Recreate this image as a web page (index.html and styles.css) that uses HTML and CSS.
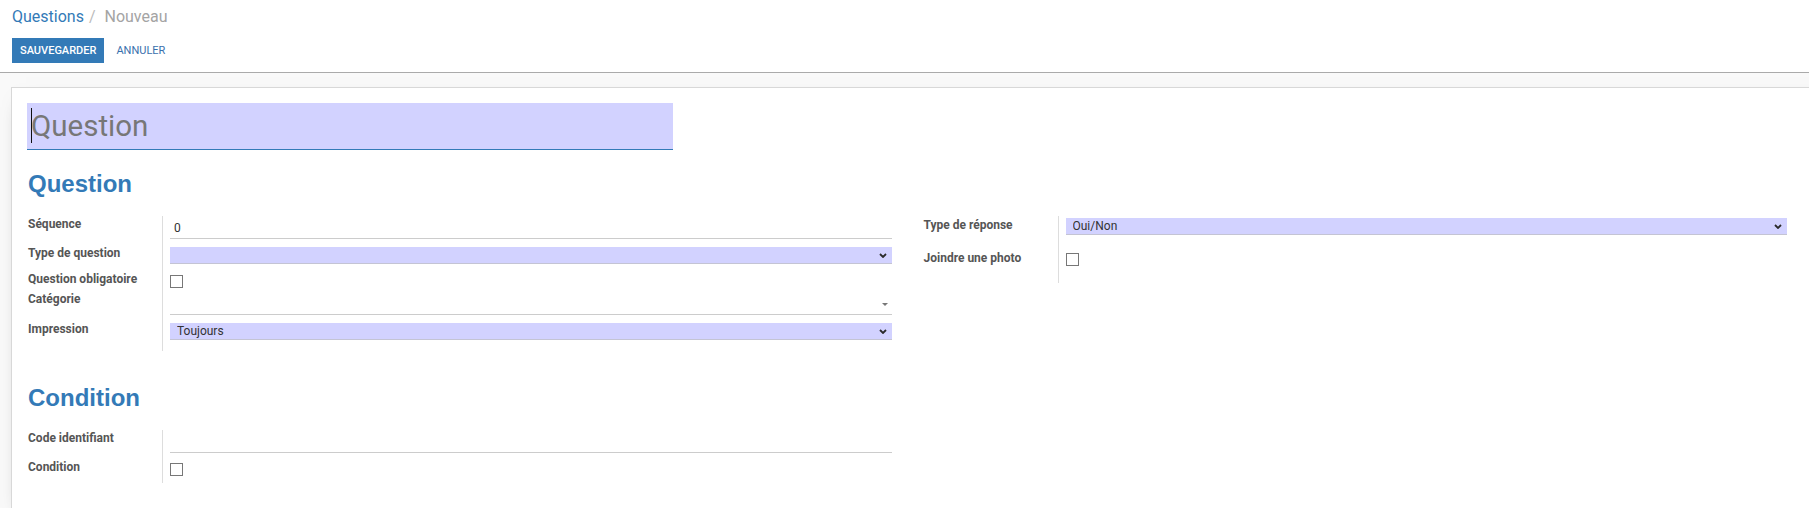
FILE: index.html
```html
<!DOCTYPE html>
<html lang="fr">
  <head>
    <meta charset="UTF-8" />
    <meta name="viewport" content="width=device-width, initial-scale=1.0" />
    <title>Questions - Nouveau</title>
    <link rel="stylesheet" href="styles.css">
  </head>
  <body>
    <div class="control-panel">
      <ol class="breadcrumb">
        <li><a href="#">Questions</a></li>
        <li class="active">Nouveau</li>
      </ol>
      <div class="cp-buttons">
        <button type="button" class="btn btn-primary">Sauvegarder</button>
        <button type="button" class="btn btn-link">Annuler</button>
      </div>
    </div>

    <div class="form-view">
      <div class="sheet">
        <div class="title">
          <input type="text" class="title-input" placeholder="Question" />
        </div>

        <h2 class="separator">Question</h2>
        <div class="group-cols">
          <div class="group">
            <label for="sequence">Séquence</label>
            <div class="field">
              <input type="text" id="sequence" class="field-input" value="0" />
            </div>

            <label for="question_type">Type de question</label>
            <div class="field">
              <div class="field-select">
                <select id="question_type">
                  <option value=""></option>
                </select>
                <svg class="select-caret" width="8" height="5" viewBox="0 0 8 5"><path d="M1 1l3 3 3-3" fill="none" stroke="#2b2b2b" stroke-width="1.8"/></svg>
              </div>
            </div>

            <label for="required">Question obligatoire</label>
            <div class="field">
              <input type="checkbox" id="required" class="field-check" />
            </div>

            <label for="category">Catégorie</label>
            <div class="field">
              <div class="field-m2o">
                <input type="text" id="category" class="field-input" />
                <span class="m2o-caret"></span>
              </div>
            </div>

            <label for="printing">Impression</label>
            <div class="field">
              <div class="field-select">
                <select id="printing">
                  <option value="always">Toujours</option>
                </select>
                <svg class="select-caret" width="8" height="5" viewBox="0 0 8 5"><path d="M1 1l3 3 3-3" fill="none" stroke="#2b2b2b" stroke-width="1.8"/></svg>
              </div>
            </div>
          </div>

          <div class="group group-aside">
            <label for="answer_type">Type de réponse</label>
            <div class="field">
              <div class="field-select">
                <select id="answer_type">
                  <option value="yes_no">Oui/Non</option>
                </select>
                <svg class="select-caret" width="8" height="5" viewBox="0 0 8 5"><path d="M1 1l3 3 3-3" fill="none" stroke="#2b2b2b" stroke-width="1.8"/></svg>
              </div>
            </div>

            <label for="photo">Joindre une photo</label>
            <div class="field">
              <input type="checkbox" id="photo" class="field-check" />
            </div>
          </div>
        </div>

        <h2 class="separator">Condition</h2>
        <div class="group-cols">
          <div class="group">
            <label for="code">Code identifiant</label>
            <div class="field">
              <input type="text" id="code" class="field-input" />
            </div>

            <label for="condition">Condition</label>
            <div class="field">
              <input type="checkbox" id="condition" class="field-check" />
            </div>
          </div>
        </div>
      </div>
    </div>
  </body>
</html>
```

FILE: styles.css
```css
html,
body {
  margin: 0;
}
body {
  font-family: Roboto, "Noto Sans", sans-serif;
  font-size: 12px;
  color: #4c4c4c;
  background: #f9f9f9;
  height: 508px;
  overflow: hidden;
}

/* top bar */
.control-panel {
  background: #fff;
  border-bottom: 1px solid #aaa;
  padding: 6px 12px 9px;
}
.breadcrumb {
  display: flex;
  list-style: none;
  margin: 0;
  padding: 0;
  font-size: 16px;
  line-height: 22px;
}
.breadcrumb a {
  color: #337ab7;
  text-decoration: none;
}
.breadcrumb li + li::before {
  content: "/\00a0";
  padding: 0 5px;
  color: #bbb;
}
.breadcrumb .active {
  color: #a4a4a4;
}
.cp-buttons {
  display: flex;
  margin-top: 10px;
}
.btn {
  height: 25px;
  padding: 0 8px;
  border: 0;
  border-radius: 0;
  font-family: Roboto, sans-serif;
  font-size: 11px;
  font-weight: 500;
  text-transform: uppercase;
  cursor: pointer;
}
.btn-primary {
  background: #337ab7;
  color: #fff;
}
.btn-link {
  background: none;
  color: #3a70ad;
  font-weight: 400;
  margin-left: 4px;
}

/* form sheet */
.form-view {
  padding-top: 14px;
}
.sheet {
  margin-left: 11px;
  width: 1810px;
  min-height: 400px;
  padding: 15px 16px 0;
  background: #fff;
  border: 1px solid #d8d8d8;
  border-right: 0;
  box-shadow: 0 5px 20px -15px rgba(0, 0, 0, 0.6);
}
.title {
  position: relative;
  width: 646px;
  margin-left: -1px;
}
.title::before {
  content: "";
  position: absolute;
  left: 4px;
  top: 5px;
  width: 1px;
  height: 35px;
  background: #111;
}
.title-input {
  display: block;
  width: 100%;
  height: 47px;
  box-sizing: border-box;
  padding: 0 4px;
  border: 0;
  border-bottom: 1px solid #337ab7;
  background: #d2d2ff;
  font-family: Roboto, sans-serif;
  font-size: 29.5px;
  color: #4c4c4c;
  outline: none;
}
.title-input::placeholder {
  color: #777;
}
.separator {
  margin: 20px 0 17px;
  font-family: "Liberation Sans", Arial, sans-serif;
  font-size: 24px;
  font-weight: 700;
  line-height: 1.2;
  color: #337ab7;
}

/* label / field groups */
.group-cols {
  display: grid;
  grid-template-columns: 1fr 1fr;
  gap: 32px;
  width: 1759px;
  align-items: start;
  margin-bottom: 33px;
}
.group {
  display: grid;
  grid-template-columns: 134px 1fr;
}
.group > label {
  line-height: 16px;
  font-weight: 700;
  color: #555;
}
.field {
  border-left: 1px solid #ddd;
  padding-left: 7px;
}
.group > .field:last-child {
  padding-bottom: 4px;
}
.field-input {
  display: block;
  width: 100%;
  height: 23px;
  box-sizing: border-box;
  margin: 0 0 6px;
  padding: 2px 4px 0;
  border: 0;
  border-bottom: 1px solid #ccc;
  background: transparent;
  font-family: Roboto, sans-serif;
  font-size: 12px;
  color: #333;
  outline: none;
}
.field-m2o {
  position: relative;
}
.field-m2o .field-input {
  height: 24px;
}
.m2o-caret {
  position: absolute;
  right: 4px;
  top: 12px;
  border-left: 3px solid transparent;
  border-right: 3px solid transparent;
  border-top: 3px solid #777;
}
.field-select {
  position: relative;
  margin: 2px 0 7px;
}
.field-select select {
  display: block;
  width: 100%;
  height: 17px;
  box-sizing: border-box;
  padding: 0 20px 0 7px;
  border: 0;
  border-bottom: 1px solid #c4c4d4;
  border-radius: 0;
  background: #d2d2ff;
  font-family: Roboto, sans-serif;
  font-size: 12px;
  color: #333;
  appearance: none;
  outline: none;
}
.select-caret {
  position: absolute;
  right: 5px;
  top: 6px;
  pointer-events: none;
}
.field-check {
  display: block;
  width: 13px;
  height: 13px;
  box-sizing: border-box;
  margin: 4px 0 3px;
  border: 1px solid #777;
  border-radius: 0;
  background: #fff;
  appearance: none;
}

/* right column sits a little looser */
.group-aside > label:first-child {
  padding-top: 1px;
}
.group-aside .field-select {
  margin-bottom: 15px;
}
.group-aside .field-check {
  margin-top: 3px;
}
.group-aside > .field:last-child {
  padding-bottom: 14px;
}
```
